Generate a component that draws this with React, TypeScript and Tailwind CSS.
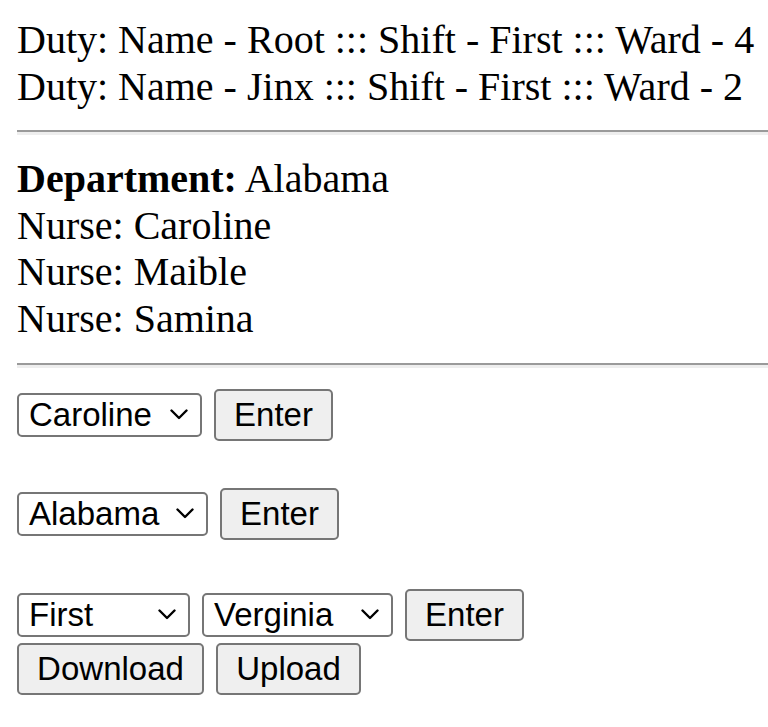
import React from "react";

const serif = { fontFamily: '"Liberation Serif", "Times New Roman", serif' };
const sans = { fontFamily: '"Liberation Sans", Arial, sans-serif' };

function Rule({ className }: { className: string }) {
  return (
    <div
      className={`h-[5px] border-t-2 border-[#9a9a9a] bg-[#eeeeee] ${className}`}
    />
  );
}

function Select({ value, width }: { value: string; width: string }) {
  return (
    <div
      className={`flex h-[44px] ${width} items-center justify-between rounded-[5px] border-2 border-[#767676] bg-white pl-[10px] pr-[12px] text-[33px] leading-none text-black`}
      style={sans}
    >
      <span>{value}</span>
      <svg
        className="h-[11px] w-[18px] shrink-0"
        viewBox="0 0 18 11"
        fill="none"
      >
        <polyline
          points="1.5,1.5 9,9 16.5,1.5"
          stroke="#000"
          strokeWidth="2.4"
          strokeLinejoin="round"
          strokeLinecap="round"
        />
      </svg>
    </div>
  );
}

function Button({ label, width }: { label: string; width: string }) {
  return (
    <div
      className={`flex h-[52px] ${width} items-center justify-center rounded-[5px] border-2 border-[#767676] bg-[#efefef] text-[33px] leading-none text-black`}
      style={sans}
    >
      {label}
    </div>
  );
}

const duties = [
  { name: "Root", shift: "First", ward: 4 },
  { name: "Jinx", shift: "First", ward: 2 },
];

const nurses = ["Caroline", "Maible", "Samina"];

export default function App() {
  return (
    <div className="min-h-[727px] bg-white pl-[17px] pt-[16px] text-black">
      <div className="text-[40px] leading-[47px]" style={serif}>
        {duties.map((d) => (
          <div key={d.name}>
            Duty: Name - {d.name} ::: Shift - {d.shift} ::: Ward - {d.ward}
          </div>
        ))}
      </div>
      <Rule className="mt-[20px]" />
      <div className="mt-[21px] text-[40px] leading-[46.7px]" style={serif}>
        <div>
          <strong>Department:</strong> Alabama
        </div>
        {nurses.map((n) => (
          <div key={n}>Nurse: {n}</div>
        ))}
      </div>
      <Rule className="mt-[20px]" />
      <div className="mt-[21px] flex items-center gap-[12px]">
        <Select value="Caroline" width="w-[185px]" />
        <Button label="Enter" width="w-[119px]" />
      </div>
      <div className="mt-[47px] flex items-center gap-[12px]">
        <Select value="Alabama" width="w-[191px]" />
        <Button label="Enter" width="w-[119px]" />
      </div>
      <div className="mt-[49px] flex items-center gap-[12px]">
        <Select value="First" width="w-[173px]" />
        <Select value="Verginia" width="w-[191px]" />
        <Button label="Enter" width="w-[119px]" />
      </div>
      <div className="mt-[2px] flex items-center gap-[12px]">
        <Button label="Download" width="w-[187px]" />
        <Button label="Upload" width="w-[145px]" />
      </div>
    </div>
  );
}
